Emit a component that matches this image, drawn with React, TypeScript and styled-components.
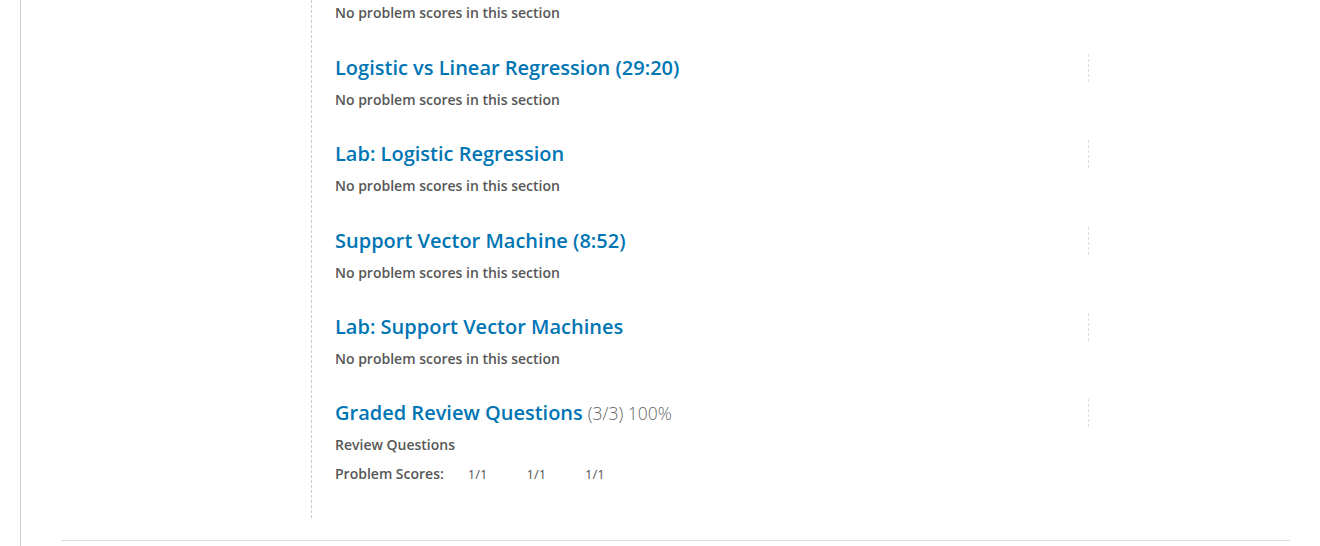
import React from 'react';
import styled, { createGlobalStyle } from 'styled-components';

const GlobalStyle = createGlobalStyle`
  html, body {
    margin: 0;
    padding: 0;
    background: #fff;
    font-family: "Open Sans", "Liberation Sans", Arial, sans-serif;
  }
`;

// página com a borda cinza à esquerda
const Page = styled.div`
  margin-left: 20px;
  border-left: 1px solid #ccc;
  min-height: 546px;
  box-sizing: border-box;
`;

const Layout = styled.div`
  display: grid;
  grid-template-columns: 290px 1fr;
`;

const Sidebar = styled.div``;

const Chapters = styled.div`
  border-left: 1px dashed #ccc;
  padding: 3px 0 34px 23px;
`;

const Section = styled.section`
  & + & {
    margin-top: 30.25px;
  }
  &:nth-child(2) {
    margin-top: 31px;
  }
`;

const HeadingRow = styled.div`
  width: 753px;
  height: 28px;
  border-right: 1px dashed #ddd;
  display: flex;
  align-items: center;
  margin-bottom: 8px;
`;

const Title = styled.h3`
  margin: 0;
  font-size: 20px;
  font-weight: 600;
  line-height: 28px;
  color: #0075b4;
`;

const Score = styled.span`
  font-size: 17.5px;
  font-weight: 300;
  color: #666;
  margin-left: 5px;
`;

const Info = styled.p`
  margin: 0;
  font-size: 14px;
  font-weight: 600;
  line-height: 20px;
  color: #575757;
`;

const ScoreRow = styled.div`
  display: flex;
  align-items: baseline;
  margin-top: 9px;
  line-height: 20px;
`;

const ScoreLabel = styled.span`
  font-size: 14px;
  font-weight: 600;
  color: #575757;
  margin-right: 24px;
`;

const ScoreList = styled.ol`
  display: flex;
  gap: 39px;
  list-style: none;
  margin: 0;
  padding: 0;
`;

const ScoreItem = styled.li`
  font-size: 13px;
  color: #555;
`;

const Footer = styled.div`
  margin: 22px 30px 0 40px;
  border-top: 1px solid #ddd;
  height: 5px;
`;

const secoes = [
  'Logistic vs Linear Regression (29:20)',
  'Lab: Logistic Regression',
  'Support Vector Machine (8:52)',
  'Lab: Support Vector Machines',
];

export default function App() {
  return (
    <>
      <GlobalStyle />
      <Page>
        <Layout>
          <Sidebar />
          <Chapters>
            {/* continuação da seção anterior (título fora da tela) */}
            <Section>
              <Info>No problem scores in this section</Info>
            </Section>

            {secoes.map((titulo) => (
              <Section key={titulo}>
                <HeadingRow>
                  <Title>{titulo}</Title>
                </HeadingRow>
                <Info>No problem scores in this section</Info>
              </Section>
            ))}

            <Section>
              <HeadingRow>
                <Title>
                  Graded Review Questions
                  <Score>(3/3) 100%</Score>
                </Title>
              </HeadingRow>
              <Info>Review Questions</Info>
              <ScoreRow>
                <ScoreLabel>Problem Scores:</ScoreLabel>
                <ScoreList>
                  <ScoreItem>1/1</ScoreItem>
                  <ScoreItem>1/1</ScoreItem>
                  <ScoreItem>1/1</ScoreItem>
                </ScoreList>
              </ScoreRow>
            </Section>
          </Chapters>
        </Layout>
        <Footer />
      </Page>
    </>
  );
}
